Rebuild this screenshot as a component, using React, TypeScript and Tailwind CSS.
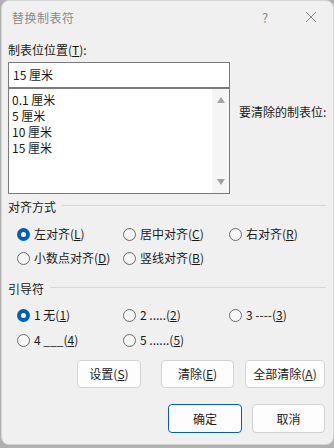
import React from "react";

const font = { fontFamily: '"Noto Sans CJK SC", "Noto Sans", sans-serif' };

function Radio({ checked, children }: { checked?: boolean; children: React.ReactNode }) {
  return (
    <div className="flex items-center h-[16px]">
      {checked ? (
        <span className="w-[13px] h-[13px] rounded-full bg-[#005fb8] flex items-center justify-center shrink-0">
          <span className="w-[5px] h-[5px] rounded-full bg-white" />
        </span>
      ) : (
        <span className="w-[13px] h-[13px] rounded-full border border-[#6b6b6b] bg-[#f7f7f7] shrink-0" />
      )}
      <span className="ml-[4px] text-[12px] leading-[16px] text-[#1a1a1a] whitespace-nowrap">{children}</span>
    </div>
  );
}

function Btn({ w, primary, children }: { w: string; primary?: boolean; children: React.ReactNode }) {
  return (
    <div
      className={
        "h-[28px] rounded-[4px] flex items-center justify-center text-[12px] text-[#1a1a1a] bg-[#fdfdfd] border " +
        (primary ? "border-[#005fb8] " : "border-[#d2d2d2] ") +
        w
      }
    >
      {children}
    </div>
  );
}

export default function App() {
  return (
    <div className="w-[334px] h-[448px] bg-[#b0b0b0] overflow-hidden" style={font}>
      <div className="ml-[1px] w-[333px] h-[445px] bg-[#f0f0f0] rounded-[8px] border border-[#d4d4d4] flex flex-col">
        {/* title bar */}
        <div className="h-[33px] flex items-center relative shrink-0">
          <span className="ml-[10px] text-[12px] text-[#8a8a8a] tracking-[0.5px]">替换制表符</span>
          <span className="absolute left-[260px] top-[7px] text-[13px] text-[#8a8a8a]">?</span>
          <svg className="absolute left-[303px] top-[10px]" width="12" height="12" viewBox="0 0 12 12">
            <path d="M1 1 L11 11 M11 1 L1 11" stroke="#8a8a8a" strokeWidth="1" />
          </svg>
        </div>

        <div className="px-[6px] flex flex-col text-[12px] text-[#1a1a1a]">
          <div className="mt-[8px] leading-[16px]">
            制表位位置(<u>T</u>):
          </div>
          <div className="flex items-start mt-[4px]">
            <div className="flex flex-col w-[222px]">
              <div className="h-[26px] border border-[#7a7a7a] bg-white flex items-center pl-[4px] leading-[16px]">
                15 厘米
              </div>
              <div className="h-[106px] border border-[#7a7a7a] bg-white flex">
                <div className="flex-1 pt-[3px] pl-[3px] leading-[16px]">
                  <div>0.1 厘米</div>
                  <div>5 厘米</div>
                  <div>10 厘米</div>
                  <div>15 厘米</div>
                </div>
                <div className="w-[17px] bg-[#f5f5f5] flex flex-col items-center justify-between py-[8px]">
                  <svg width="8" height="6" viewBox="0 0 8 6">
                    <path d="M4 0 L8 6 L0 6 Z" fill="#a3a3a3" />
                  </svg>
                  <svg width="8" height="6" viewBox="0 0 8 6">
                    <path d="M0 0 L8 0 L4 6 Z" fill="#a3a3a3" />
                  </svg>
                </div>
              </div>
            </div>
            <div className="ml-[9px] mt-[42px] leading-[16px] whitespace-nowrap">要清除的制表位:</div>
          </div>

          {/* alignment */}
          <div className="mt-[5px] flex items-center h-[16px]">
            <span className="leading-[16px]">对齐方式</span>
            <div className="ml-[6px] flex-1 h-px bg-[#d8d8d8] mr-[1px] -mt-[3px]" />
          </div>
          <div className="mt-[11px] ml-[9px] grid grid-cols-[106px_106px_106px] gap-y-[8px]">
            <Radio checked>
              左对齐(<u>L</u>)
            </Radio>
            <Radio>
              居中对齐(<u>C</u>)
            </Radio>
            <Radio>
              右对齐(<u>R</u>)
            </Radio>
            <Radio>
              小数点对齐(<u>D</u>)
            </Radio>
            <Radio>
              竖线对齐(<u>B</u>)
            </Radio>
          </div>

          {/* leader */}
          <div className="mt-[15px] flex items-center h-[16px]">
            <span className="leading-[16px]">引导符</span>
            <div className="ml-[6px] flex-1 h-px bg-[#d8d8d8] mr-[1px] -mt-[3px]" />
          </div>
          <div className="mt-[10px] ml-[9px] grid grid-cols-[106px_106px_106px] gap-y-[9px]">
            <Radio checked>
              1 无(<u>1</u>)
            </Radio>
            <Radio>
              2 .....(<u>2</u>)
            </Radio>
            <Radio>
              3 ----(<u>3</u>)
            </Radio>
            <Radio>
              4 ___(<u>4</u>)
            </Radio>
            <Radio>
              5 ......(<u>5</u>)
            </Radio>
          </div>

          {/* buttons */}
          <div className="mt-[12px] flex justify-end gap-[20px] pr-[2px]">
            <Btn w="w-[64px]">
              设置(<u>S</u>)
            </Btn>
            <div className="flex gap-[11px]">
              <Btn w="w-[73px]">
                清除(<u>E</u>)
              </Btn>
              <Btn w="w-[80px]">
                全部清除(<u>A</u>)
              </Btn>
            </div>
          </div>
          <div className="mt-[16px] flex justify-end gap-[10px] pr-[2px]">
            <Btn w="w-[74px] h-[29px]" primary>
              确定
            </Btn>
            <Btn w="w-[73px] h-[29px]">取消</Btn>
          </div>
        </div>
      </div>
    </div>
  );
}
